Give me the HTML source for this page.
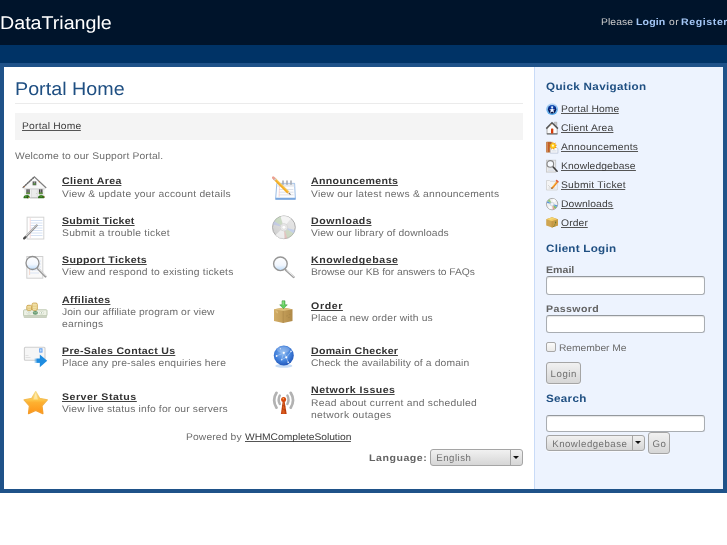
<!DOCTYPE html>
<html><head><meta charset="utf-8"><title>DataTriangle - Portal Home</title>
<style>
html,body{margin:0;padding:0;background:#fff;}
body{width:727px;height:545px;position:relative;overflow:hidden;font-family:"Liberation Sans",sans-serif;}
#w{position:absolute;left:0;top:0;width:727px;height:545px;will-change:transform;text-rendering:geometricPrecision;}
.r{position:absolute;}
.t{position:absolute;white-space:nowrap;line-height:1;transform-origin:0 0;font-family:"Liberation Sans",sans-serif;}
.inp{position:absolute;box-sizing:border-box;background:#fff;border:1px solid #a9adb2;border-top-color:#94989d;border-radius:3px;box-shadow:inset 0 1px 1px rgba(0,0,0,.10);}
.cb{position:absolute;box-sizing:border-box;width:10px;height:10px;background:linear-gradient(#fbfbfa,#ebeae8);border:1px solid #a8a8a8;border-radius:2px;}
.btn,.sel{position:absolute;box-sizing:border-box;border:1px solid #a5a5a5;border-radius:3px;background:linear-gradient(#f1f1f1,#d6d6d6);box-shadow:0 1px 0 rgba(255,255,255,.6);}
.st{position:absolute;white-space:nowrap;line-height:1;font-size:9.64px;letter-spacing:.4px;color:#707070;}
.dv{position:absolute;top:0;bottom:0;width:1px;background:#a5a5a5;}
.ar{position:absolute;width:0;height:0;border-left:3px solid transparent;border-right:3px solid transparent;border-top:3.3px solid #111;}
.ic{position:absolute;}
.si{position:absolute;}
</style></head><body>
<svg width="0" height="0" style="position:absolute"><defs>
<g id="s0"><circle cx="6.100" cy="6.100" r="5.900" fill="url(#gS0a)"/><circle cx="6.100" cy="6.250" r="4.150" fill="url(#gS0b)"/><circle cx="6.100" cy="4.200" r=".9" fill="#fff"/><path d="M6.100 5.100l1.100 1.300 1.800-.5-1.600 1.500.9 2.600-2.200-1.400-2.200 1.400.9-2.600-1.600-1.500 1.800.5z" fill="#f4f8ff"/></g>
<g id="s1"><path d="M8.300.2h2.500v4.800H8.300z" fill="#c9c9c9" stroke="#9a9a9a" stroke-width=".5"/><path d="M1 6.200L6 1.200l5.200 5v5.700H1z" fill="#fbfbfb" stroke="#9c9c9c" stroke-width=".8"/><path d="M.8 11.900h10.700" stroke="#5a5a5a" stroke-width="1"/><path d="M.3 6.600L6 .8l5.900 5.800" fill="none" stroke="#555" stroke-width="1.500" stroke-linejoin="miter"/><rect x="5" y="6.600" width="2.300" height="5" rx=".6" fill="#d63c0a"/><circle cx="4.600" cy="2.700" r=".5" fill="#d88a3a"/></g>
<g id="s2"><rect x=".2" y=".8" width="5.600" height="10.700" rx=".6" fill="#b86a2a"/><path d="M1.300 1.200v9.800" stroke="#e0a070" stroke-width=".8"/><path d="M2.600 2v9" stroke="#d8482a" stroke-width="1" stroke-dasharray="1 1.200"/><path d="M4.300 6.600h6.600l1 1.200v4.400H4.300z" fill="#f8f9fb" stroke="#b4c0d6" stroke-width=".7"/><path d="M5.500 9.500h5M5.500 10.800h5" stroke="#d5dbe6" stroke-width=".6"/><path d="M6.800.6l1 1.800 1.900-.9-.5 2 2 .6-1.700 1.200 1.100 1.800-2.100-.2-.4 2.100-1.300-1.700-1.600 1.400.1-2.100-2.100-.3 1.600-1.400-1.300-1.700 2.100.2z" fill="#f59a0a"/><circle cx="6.900" cy="4.800" r="2.500" fill="#ffc914"/><circle cx="6.900" cy="4.700" r="1.100" fill="#fff6c8"/></g>
<g id="s3"><rect x=".5" y=".2" width="9.200" height="11.900" fill="#ececec" stroke="#c4c4c4" stroke-width=".8"/><path d="M2 9h6M2 10.500h6" stroke="#d6dde8" stroke-width=".7"/><path d="M6.500 6.300l4.600 4.900" stroke="#3c3c3c" stroke-width="1.600" stroke-linecap="round"/><circle cx="4.300" cy="3.900" r="3.300" fill="#f6f9fd" stroke="#858585" stroke-width="1.100"/></g>
<g id="s4"><path d="M.5 1.500h3l.8.800h7v8.700H.5z" fill="#f4f4f4" stroke="#cfcfcf" stroke-width=".8"/><path d="M2 6l2.500 2.500M2.500 9h7" stroke="#c9c9c9" stroke-width=".7"/><path d="M5.700 8.300L10.600 2.300l1.300 1.100L7 9.400l-1.800.5z" fill="#f0861a"/><path d="M6.300 7.900L10.700 2.600" stroke="#fbd060" stroke-width=".8"/><path d="M10.600 1.600l1.400 1.200" stroke="#e0603a" stroke-width="1.600" stroke-linecap="round"/><path d="M5.200 9.900l.6-1.600 1.100 1z" fill="#6a5a40"/></g>
<g id="s5"><circle cx="6.100" cy="6.100" r="5.700" fill="#f1f1f1" stroke="#9c9c9c" stroke-width=".8"/><path d="M6.100 6.100L1.600 3.200A5.400 5.400 0 0 1 3.600 1.300z" fill="#7cc05a" opacity=".75"/><path d="M6.100 6.100L.9 5A5.400 5.400 0 0 1 1.600 3.200z" fill="#5a96dc"/><path d="M6.100 6.100l4.500 2.900A5.400 5.400 0 0 1 8.600 10.900z" fill="#62b040" opacity=".75"/><path d="M6.100 6.100L11.300 7.200A5.400 5.400 0 0 1 10.600 9z" fill="#5a96dc"/><path d="M6.100 6.100L8.600 10.900A5.400 5.400 0 0 1 6.800 11.400z" fill="#e89a8a"/><path d="M6.100 6.100L2 9.800A5.400 5.400 0 0 0 5.300 11.400z" fill="#fff" opacity=".8"/><path d="M6.100 6.100L10.200 2.400A5.400 5.400 0 0 0 6.900 .8z" fill="#fff" opacity=".8"/><circle cx="6.100" cy="6.100" r="1.900" fill="#e9edf2" stroke="#b9c2cf" stroke-width=".5"/><circle cx="6.100" cy="6.100" r=".7" fill="#fff"/></g>
<g id="s6"><path d="M.2 2.200L6 .2l5.900 2v6.200L6 10.600.2 8.400z" fill="#cfa552"/><path d="M.2 2.200L6 4.200l5.900-2L6 .2z" fill="#efc862"/><path d="M2.200 1.900l3.600-1.200 2.500.9-3.700 1.300z" fill="#f8dc78" opacity=".8"/><path d="M6 4.200v6.400l5.900-2.200V2.200z" fill="#c89c48"/><path d="M6 4.200v6.400" stroke="#b88a3a" stroke-width=".5"/><path d="M9.300 4.800l.8-.3v1.800l-.8.300zM8.300 7.700l.9-.3v.9l-.9.300zM7.300 9.400l.8-.3v.6l-.8.300z" fill="#3f6e24"/></g>

<!-- L0 house -->
<g id="L0">
<path d="M2.300 12.200h20.300v9.500H2.300z" fill="#f1f1f1"/>
<path d="M2.300 12.200h20.300v1.600H2.300z" fill="#dcdcdc"/>
<path d="M2.600 12L12.400 2.400 22.300 12z" fill="#f8f8f8"/>
<path d="M.6 12L12.400 .9 24.200 12" fill="none" stroke="#808080" stroke-width="1.300" stroke-linejoin="miter"/>
<path d="M1.500 11.100L12.400 .9" stroke="#666" stroke-width="1.200" stroke-dasharray="1.500 1"/>
<circle cx="2.200" cy="10.800" r=".55" fill="#c86a2a"/><circle cx="17.300" cy="5.800" r=".55" fill="#c86a2a"/>
<rect x="10.600" y="5.400" width="3.700" height="3.900" fill="#5d5d5d"/><rect x="11.400" y="7.300" width="2.100" height="1.500" fill="#4f9a34"/><path d="M12.450 5.400v2" stroke="#ddd" stroke-width=".5"/>
<rect x="4.400" y="13.300" width="3.300" height="4.900" fill="#3f3f3f"/><rect x="4.400" y="16.500" width="3.300" height="1.500" fill="#5f9a3a"/><path d="M6.050 13.300v3.200" stroke="#e6e6e6" stroke-width=".6"/>
<rect x="16.900" y="13.300" width="3.600" height="4.900" fill="#3f3f3f"/><rect x="16.900" y="16.500" width="3.600" height="1.500" fill="#5f9a3a"/><path d="M18.700 13.300v3.200" stroke="#e6e6e6" stroke-width=".6"/>
<rect x="9.700" y="13.200" width="5.500" height="8.500" fill="#ebebeb" stroke="#d4d4d4" stroke-width=".6"/><circle cx="14.300" cy="17.700" r=".4" fill="#aaa"/>
<path d="M8 21.900h9.200" stroke="#b4b4b4" stroke-width="1"/>
<path d="M1.500 21.400c.2-1.600 1.600-2.400 3-2.200 1.400-.4 2.800.4 3.200 1.800.2.900-.6 1.300-1.600 1.300H2.700c-.8 0-1.300-.3-1.200-.9z" fill="#2f6e1a"/>
<path d="M16 21.300c.3-1.500 1.700-2.300 3.200-2 1.500-.4 3 .4 3.400 1.800.2.900-.5 1.200-1.500 1.200h-3.900c-.8 0-1.300-.4-1.200-1z" fill="#2f6e1a"/>
<circle cx="3.600" cy="20.500" r=".9" fill="#4c9430"/><circle cx="19.200" cy="20.300" r="1" fill="#4c9430"/><circle cx="6.600" cy="21.500" r=".6" fill="#b8a420"/><circle cx="22" cy="20.800" r=".55" fill="#c8502a"/><circle cx="5.600" cy="21.700" r=".5" fill="#222"/>
</g>
<!-- L1 document + pen -->
<g id="L1">
<rect x="4.100" y="1.200" width="16.700" height="21.800" fill="#fff" stroke="#d4d4d4" stroke-width="1"/>
<path d="M7.500 4.500h12M7.500 7h12M7.500 9.500h12M7.500 12h12M7.500 14.500h12M7.500 17h12M7.500 19.500h12" stroke="#d6e2f4" stroke-width="1"/>
<path d="M7.200 2v20" stroke="#f4cccc" stroke-width=".7"/>
<path d="M1.300 22.300L13.700 9.400" stroke="#8e8e8e" stroke-width="2" stroke-linecap="round"/>
<path d="M3 20L13.500 9.200" stroke="#d9d9d9" stroke-width=".9" stroke-linecap="round"/>
<path d="M1.100 22.500l1.300-1.300" stroke="#4a4a4a" stroke-width="2" stroke-linecap="round"/>
</g>
<!-- L2 document + magnifier -->
<g id="L2">
<rect x="3.800" y="1.500" width="16" height="21.700" fill="#f9f9f9" stroke="#d0d0d0" stroke-width="1"/>
<path d="M7 6h11M7 9h11M7 12h11M7 15h11M7 18h9" stroke="#dbe5f5" stroke-width="1"/>
<path d="M6.600 14v6" stroke="#f0c8b8" stroke-width=".7"/>
<path d="M14.500 13.200l8 8.300" stroke="#9a9a9a" stroke-width="2.200" stroke-linecap="round"/>
<path d="M15.300 13.400l7.300 7.400" stroke="#ececec" stroke-width=".9" stroke-linecap="round"/>
<circle cx="9.500" cy="8" r="6.500" fill="url(#gGlass)" stroke="#909090" stroke-width="1.300"/>
</g>
<!-- L3 money -->
<g id="L3">
<rect x=".6" y="16.600" width="23.400" height="3.300" rx=".8" fill="#c9d0bf"/>
<path d="M.8 18.300h23" stroke="#e4e8dc" stroke-width=".6"/>
<rect x=".6" y="11.800" width="23.400" height="6" rx=".8" fill="#eef2e6" stroke="#b7c3aa" stroke-width=".9"/>
<ellipse cx="12.300" cy="14.800" rx="2.600" ry="1.900" fill="#5d9468"/>
<path d="M10.500 14.800h3.600" stroke="#e8f0e4" stroke-width=".5"/>
<ellipse cx="6" cy="14.800" rx="2.200" ry="1.500" fill="#fbfcf6" stroke="#bfcab2" stroke-width=".5"/>
<ellipse cx="18.600" cy="14.800" rx="2.200" ry="1.500" fill="#fbfcf6" stroke="#bfcab2" stroke-width=".5"/>
<circle cx="6" cy="14.800" r=".6" fill="#8aa88a"/><circle cx="18.600" cy="14.800" r=".6" fill="#8aa88a"/>
<rect x="3.800" y="7.300" width="4.800" height="5" rx="1.200" fill="#f6e8b4" stroke="#c9a048" stroke-width=".9"/>
<path d="M4.400 9.100h3.600M4.400 10.600h3.600" stroke="#d9b860" stroke-width=".6"/>
<rect x="9.100" y="5.100" width="5.200" height="7.200" rx="1.300" fill="#f8ecbc" stroke="#c9a048" stroke-width=".9"/>
<path d="M9.700 7.100h4M9.700 8.700h4M9.700 10.300h4" stroke="#d9b860" stroke-width=".6"/>
</g>
<!-- L4 envelope + arrow -->
<g id="L4">
<rect x="1.400" y="2.300" width="20.600" height="13" rx="1" fill="#f6f6f6" stroke="#cecece" stroke-width="1.100"/>
<path d="M2.500 12.500h5M2.500 10.500h3" stroke="#dcdcdc" stroke-width=".8"/>
<rect x="16.200" y="3.300" width="3.300" height="4.300" fill="#5a9cf0"/><rect x="17.200" y="4.300" width="1.300" height="2.300" fill="#dbe9fb"/>
<linearGradient id="gArr" x1="0" y1="0" x2="1" y2="0"><stop offset="0" stop-color="#1e8ce0" stop-opacity="0"/><stop offset=".5" stop-color="#1e8ce0"/></linearGradient>
<rect x="11" y="13.500" width="7" height="4.400" fill="url(#gArr)"/>
<path d="M16.800 9.500L24.200 15.800 16.800 22.300z" fill="#1e8ce0"/>
</g>
<!-- L5 star -->
<g id="L5">
<path d="M12.70 0.50 L16.58 7.36 L24.30 8.93 L18.98 14.74 L19.87 22.57 L12.70 19.30 L5.53 22.57 L6.42 14.74 L1.10 8.93 L8.82 7.36z" fill="url(#gStar)" stroke="url(#gStarS)" stroke-width="1.300" stroke-linejoin="round"/>
<path d="M12.700 2.200l2.300 6.400H10.400z" fill="#fff6cc" opacity=".55"/>
</g>
<!-- R0 notepad + pencil -->
<g id="R0">
<path d="M4.800 7.400h17.800l.8 16H3.600z" fill="#fdfdfd" stroke="#8fb4e2" stroke-width=".9"/>
<path d="M3.700 21.700h19.600l.1 1.800H3.600z" fill="#77a6de"/>
<path d="M5.400 7.700h16.800l.1 3H5.300z" fill="#e6e9ee"/>
<path d="M7 13.500h14.300M6.900 16.200h14.600M6.800 18.900h14.800" stroke="#dde1ea" stroke-width="1"/>
<path d="M7.600 8.500L7.100 21" stroke="#f4caca" stroke-width=".7"/>
<path d="M11 5v3.300M15 5v3.300M19 5v3.300" stroke="#a2a7b0" stroke-width="1.500" stroke-linecap="round"/>
<path d="M2 2.400L16.200 16.500" stroke="#f3ac22" stroke-width="2.700"/>
<path d="M2.600 1.900L16.700 16" stroke="#fbd873" stroke-width=".9"/>
<path d="M1.200 1.600l1.500 1.500" stroke="#eba092" stroke-width="2.700" stroke-linecap="round"/>
<path d="M2.700 3.100l.9.900" stroke="#cfcfcf" stroke-width="2.700"/>
<path d="M15.100 17.500l3 .9-.9-3z" fill="#ecd0a8"/><path d="M17.300 17.600l.9.900-.2-.9z" fill="#444" stroke="#444" stroke-width=".6"/>
</g>
<!-- R1 CD -->
<g id="R1">
<circle cx="11.900" cy="12.300" r="11.400" fill="url(#gCD)" stroke="#a6a6a6" stroke-width=".9"/>
<path d="M11.900 12.300L2.200 6.300A11.400 11.400 0 0 1 8.500 1.400z" fill="#b9d6ae" opacity=".55"/>
<path d="M11.900 12.300L1 9.500A11.400 11.400 0 0 1 2.200 6.300z" fill="#b4c0ea" opacity=".6"/>
<path d="M11.900 12.300L21.600 18.300A11.400 11.400 0 0 1 15.300 23.200z" fill="#c0d6ae" opacity=".55"/>
<path d="M11.900 12.300L22.800 15.100A11.400 11.400 0 0 1 21.600 18.300z" fill="#b0c4ee" opacity=".6"/>
<path d="M11.900 12.300L15.300 23.200A11.400 11.400 0 0 1 12.500 23.700z" fill="#e8b6ae" opacity=".6"/>
<path d="M11.900 12.300L8.500 1.400A11.400 11.400 0 0 1 19 3.400z" fill="#fafafa" opacity=".75"/>
<path d="M11.900 12.300L12.500 23.700A11.400 11.400 0 0 1 3.500 20z" fill="#f8f8f8" opacity=".7"/>
<circle cx="11.900" cy="12.300" r="3.700" fill="#ededed" stroke="#cdcdcd" stroke-width=".7"/>
<circle cx="11.900" cy="12.300" r="2.200" fill="none" stroke="#d9d9d9" stroke-width=".5"/>
<circle cx="11.900" cy="12.300" r="1.300" fill="#fff"/>
</g>
<!-- R2 magnifier -->
<g id="R2">
<path d="M13.800 15l7.800 7" stroke="#a0a0a0" stroke-width="2.300" stroke-linecap="round"/>
<path d="M14.700 15.100l7.100 6.300" stroke="#f0f0f0" stroke-width="1" stroke-linecap="round"/>
<circle cx="8.400" cy="8.800" r="6.800" fill="url(#gGlass)" stroke="#969696" stroke-width="1.400"/>
</g>
<!-- R3 box + green arrow -->
<g id="R3">
<path d="M2 9.300l9.200-1.500 9.300 1.500v11.800L11.200 23 2 21.100z" fill="url(#gBox)"/>
<path d="M2 9.300l9.200 1.600 9.300-1.600-9.300-1.500z" fill="#dcbd7a"/>
<path d="M11.200 10.900V23" stroke="#a98546" stroke-width=".6"/>
<path d="M3.500 11l2 .4M4.500 12.500l1.500.3" stroke="#ecd090" stroke-width=".7"/>
<path d="M14.500 16l1-.2M16.500 17.500l1-.2M17.500 14.500l.8-.2" stroke="#9a7a40" stroke-width=".7"/>
<path d="M10 .8h3v4h2.300l-3.800 3.900L7.700 4.800H10z" fill="#62d060" stroke="#3a8a3a" stroke-width=".5"/>
<path d="M10.600 1.300h1v3.800h-1z" fill="#a8eea0" opacity=".8"/>
</g>
<!-- R4 globe -->
<g id="R4">
<ellipse cx="11.800" cy="20.900" rx="8.500" ry="1.900" fill="#b4d0f2" opacity=".75"/>
<circle cx="11.800" cy="10.500" r="10" fill="url(#gGlobe)"/>
<ellipse cx="11.300" cy="4.600" rx="6.500" ry="3.300" fill="#fff" opacity=".22"/>
<path d="M4.400 11l7.400-3.200 2.600 4.600 4.700-6M11.800 7.800L9.600 14.600l4.800-2.200 1.800 5.200" stroke="#a9c9f3" stroke-width=".6" fill="none"/>
<circle cx="11.800" cy="7.800" r="1.100" fill="#fff"/><circle cx="14.300" cy="12.300" r="1.100" fill="#fff"/><circle cx="4.600" cy="11" r=".9" fill="#eef4ff"/><circle cx="9.700" cy="14.700" r=".8" fill="#d8ecff"/><circle cx="16.200" cy="17.300" r=".8" fill="#fff"/><circle cx="19" cy="6.400" r=".8" fill="#e0eaff"/><circle cx="8.400" cy="3.800" r=".7" fill="#cfe0fa"/>
</g>
<!-- R5 antenna -->
<g id="R5">
<path d="M4.500 1.800A14 14 0 0 0 4.500 16.700" fill="none" stroke="#b2b2b2" stroke-width="2.700" stroke-linecap="round"/>
<path d="M18.700 1.800A14 14 0 0 1 18.700 16.700" fill="none" stroke="#b2b2b2" stroke-width="2.700" stroke-linecap="round"/>
<path d="M7.800 4.500A9 9 0 0 0 7.800 13" fill="none" stroke="#b2b2b2" stroke-width="2.500" stroke-linecap="round"/>
<path d="M15.400 4.500A9 9 0 0 1 15.400 13" fill="none" stroke="#b2b2b2" stroke-width="2.500" stroke-linecap="round"/>
<path d="M10.800 9.500h1.700l2.200 13.600H8.900z" fill="#c2400c"/>
<path d="M11.300 10.500h.7l.8 12.300H10.200z" fill="#e46a28" opacity=".7"/>
<path d="M10.300 14l3 1.500M9.900 17.500l4 2" stroke="#8a2a06" stroke-width=".6" opacity=".7"/>
<circle cx="11.600" cy="8.400" r="2.500" fill="#d6480e"/><circle cx="11.300" cy="7.800" r=".7" fill="#f8c060"/>
</g>

<linearGradient id="gS0a" x1="0" y1="0" x2="0" y2="1"><stop offset="0" stop-color="#c2dcf6"/><stop offset=".5" stop-color="#7ab8ee"/><stop offset="1" stop-color="#4aa2ea"/></linearGradient>
<radialGradient id="gS0b" cx=".5" cy=".2" r=".9"><stop offset="0" stop-color="#2272dc"/><stop offset=".4" stop-color="#082a8c"/><stop offset="1" stop-color="#02061e"/></radialGradient>
<linearGradient id="gCD" x1="1" y1="0" x2="0" y2="1"><stop offset="0" stop-color="#e9e9e9"/><stop offset=".5" stop-color="#dedede"/><stop offset="1" stop-color="#c9c9c9"/></linearGradient>
<linearGradient id="gStar" x1="0" y1="0" x2="0" y2="1"><stop offset="0" stop-color="#fdf0b4"/><stop offset=".38" stop-color="#fdc648"/><stop offset=".5" stop-color="#feb030"/><stop offset="1" stop-color="#ff9416"/></linearGradient>
<linearGradient id="gStarS" x1="0" y1="0" x2="0" y2="1"><stop offset="0" stop-color="#f7df8e"/><stop offset=".4" stop-color="#f4b84a"/><stop offset="1" stop-color="#f59a26"/></linearGradient>
<radialGradient id="gGlobe" cx=".45" cy=".4" r=".6"><stop offset="0" stop-color="#86b6f0"/><stop offset=".65" stop-color="#3f7eda"/><stop offset="1" stop-color="#2358ba"/></radialGradient>
<linearGradient id="gGlass" x1="0" y1="0" x2="0" y2="1"><stop offset="0" stop-color="#ffffff"/><stop offset=".6" stop-color="#f2f7fe"/><stop offset="1" stop-color="#bddcfa"/></linearGradient>
<linearGradient id="gBox" x1="0" y1="0" x2="1" y2="0"><stop offset="0" stop-color="#d2ad66"/><stop offset="1" stop-color="#b08a48"/></linearGradient>
</defs></svg>

<div id="w">
<div class="r" style="left:0px;top:0px;width:727px;height:45px;background:#00142b;"></div>
<div class="r" style="left:0px;top:45px;width:727px;height:18px;background:#003366;"></div>
<div class="r" style="left:0px;top:63px;width:727px;height:430px;background:#1f5289;"></div>
<div class="r" style="left:4px;top:67px;width:530px;height:422px;background:#fff;"></div>
<div class="r" style="left:534px;top:67px;width:189px;height:422px;background:#edf3fe;border-left:1px solid #c9dbf7;box-sizing:border-box;"></div>
<span class="t" style="left:0.30px;top:14px;font-size:18.4px;letter-spacing:-0.013px;color:#fff;transform:scaleX(1.07);">DataTriangle</span>
<span class="t" style="left:600.90px;top:18px;font-size:9.64px;letter-spacing:0.091px;color:#ccc;transform:scaleX(1.07);">Please</span>
<span class="t" style="left:636.00px;top:18px;font-size:9.64px;letter-spacing:0.115px;color:#a3c6f5;font-weight:bold;transform:scaleX(1.1);">Login</span>
<span class="t" style="left:668.70px;top:18px;font-size:9.64px;letter-spacing:0.491px;color:#ccc;transform:scaleX(1.07);">or</span>
<span class="t" style="left:681.20px;top:18px;font-size:9.64px;letter-spacing:0.534px;color:#a3c6f5;font-weight:bold;transform:scaleX(1.1);">Register</span>
<span class="t" style="left:14.90px;top:80px;font-size:18.4px;letter-spacing:0.021px;color:#1f4f82;transform:scaleX(1.07);">Portal Home</span>
<div class="r" style="left:15px;top:103px;width:508px;height:1px;background:#ebebeb;"></div>
<div class="r" style="left:15px;top:113px;width:508px;height:27px;background:#f4f4f4;"></div>
<span class="t" style="left:22.10px;top:122px;font-size:9.64px;letter-spacing:0.190px;color:#3d3d3d;transform:scaleX(1.07);width:55.4px;height:8px;border-bottom:1px solid #555;">Portal Home</span>
<span class="t" style="left:15.00px;top:152px;font-size:9.64px;letter-spacing:0.151px;color:#6c6c6c;transform:scaleX(1.07);">Welcome to our Support Portal.</span>
<span class="t" style="left:61.80px;top:177px;font-size:9.64px;letter-spacing:0.353px;color:#333;font-weight:bold;transform:scaleX(1.1);width:54.0px;height:8px;border-bottom:1px solid #444;">Client Area</span>
<span class="t" style="left:61.80px;top:190px;font-size:9.64px;letter-spacing:0.224px;color:#6c6c6c;transform:scaleX(1.07);">View &amp; update your account details</span>
<span class="t" style="left:61.80px;top:217px;font-size:9.64px;letter-spacing:0.240px;color:#333;font-weight:bold;transform:scaleX(1.1);width:65.8px;height:8px;border-bottom:1px solid #444;">Submit Ticket</span>
<span class="t" style="left:61.80px;top:229px;font-size:9.64px;letter-spacing:0.245px;color:#6c6c6c;transform:scaleX(1.07);">Submit a trouble ticket</span>
<span class="t" style="left:61.80px;top:256px;font-size:9.64px;letter-spacing:0.317px;color:#333;font-weight:bold;transform:scaleX(1.1);width:77.0px;height:8px;border-bottom:1px solid #444;">Support Tickets</span>
<span class="t" style="left:61.80px;top:268px;font-size:9.64px;letter-spacing:0.208px;color:#6c6c6c;transform:scaleX(1.07);">View and respond to existing tickets</span>
<span class="t" style="left:61.80px;top:296px;font-size:9.64px;letter-spacing:0.351px;color:#333;font-weight:bold;transform:scaleX(1.1);width:43.8px;height:8px;border-bottom:1px solid #444;">Affiliates</span>
<span class="t" style="left:61.80px;top:308px;font-size:9.64px;letter-spacing:0.107px;color:#6c6c6c;transform:scaleX(1.07);">Join our affiliate program or view</span>
<span class="t" style="left:61.80px;top:320px;font-size:9.64px;letter-spacing:0.222px;color:#6c6c6c;transform:scaleX(1.07);">earnings</span>
<span class="t" style="left:61.80px;top:347px;font-size:9.64px;letter-spacing:0.290px;color:#333;font-weight:bold;transform:scaleX(1.1);width:102.9px;height:8px;border-bottom:1px solid #444;">Pre-Sales Contact Us</span>
<span class="t" style="left:61.80px;top:359px;font-size:9.64px;letter-spacing:0.151px;color:#6c6c6c;transform:scaleX(1.07);">Place any pre-sales enquiries here</span>
<span class="t" style="left:61.80px;top:393px;font-size:9.64px;letter-spacing:0.447px;color:#333;font-weight:bold;transform:scaleX(1.1);width:67.5px;height:8px;border-bottom:1px solid #444;">Server Status</span>
<span class="t" style="left:61.80px;top:405px;font-size:9.64px;letter-spacing:0.159px;color:#6c6c6c;transform:scaleX(1.07);">View live status info for our servers</span>
<span class="t" style="left:311.00px;top:177px;font-size:9.64px;letter-spacing:0.307px;color:#333;font-weight:bold;transform:scaleX(1.1);width:79.1px;height:8px;border-bottom:1px solid #444;">Announcements</span>
<span class="t" style="left:311.00px;top:190px;font-size:9.64px;letter-spacing:0.212px;color:#6c6c6c;transform:scaleX(1.07);">View our latest news &amp; announcements</span>
<span class="t" style="left:311.00px;top:217px;font-size:9.64px;letter-spacing:0.482px;color:#333;font-weight:bold;transform:scaleX(1.1);width:55.2px;height:8px;border-bottom:1px solid #444;">Downloads</span>
<span class="t" style="left:311.00px;top:229px;font-size:9.64px;letter-spacing:0.113px;color:#6c6c6c;transform:scaleX(1.07);">View our library of downloads</span>
<span class="t" style="left:311.00px;top:256px;font-size:9.64px;letter-spacing:0.484px;color:#333;font-weight:bold;transform:scaleX(1.1);width:79.1px;height:8px;border-bottom:1px solid #444;">Knowledgebase</span>
<span class="t" style="left:311.00px;top:268px;font-size:9.64px;letter-spacing:-0.026px;color:#6c6c6c;transform:scaleX(1.07);">Browse our KB for answers to FAQs</span>
<span class="t" style="left:311.00px;top:302px;font-size:9.64px;letter-spacing:0.604px;color:#333;font-weight:bold;transform:scaleX(1.1);width:28.6px;height:8px;border-bottom:1px solid #444;">Order</span>
<span class="t" style="left:311.00px;top:314px;font-size:9.64px;letter-spacing:0.149px;color:#6c6c6c;transform:scaleX(1.07);">Place a new order with us</span>
<span class="t" style="left:311.00px;top:347px;font-size:9.64px;letter-spacing:0.239px;color:#333;font-weight:bold;transform:scaleX(1.1);width:79.1px;height:8px;border-bottom:1px solid #444;">Domain Checker</span>
<span class="t" style="left:311.00px;top:359px;font-size:9.64px;letter-spacing:0.136px;color:#6c6c6c;transform:scaleX(1.07);">Check the availability of a domain</span>
<span class="t" style="left:311.00px;top:386px;font-size:9.64px;letter-spacing:0.440px;color:#333;font-weight:bold;transform:scaleX(1.1);width:76.4px;height:8px;border-bottom:1px solid #444;">Network Issues</span>
<span class="t" style="left:311.00px;top:399px;font-size:9.64px;letter-spacing:0.231px;color:#6c6c6c;transform:scaleX(1.07);">Read about current and scheduled</span>
<span class="t" style="left:311.00px;top:411px;font-size:9.64px;letter-spacing:0.306px;color:#6c6c6c;transform:scaleX(1.07);">network outages</span>
<svg class="ic" style="left:22.0px;top:175.5px" width="25" height="25" viewBox="0 0 25 25"><use href="#L0"/></svg>
<svg class="ic" style="left:22.5px;top:215.5px" width="25" height="25" viewBox="0 0 25 25"><use href="#L1"/></svg>
<svg class="ic" style="left:22.5px;top:255px" width="25" height="25" viewBox="0 0 25 25"><use href="#L2"/></svg>
<svg class="ic" style="left:22.5px;top:298px" width="25" height="25" viewBox="0 0 25 25"><use href="#L3"/></svg>
<svg class="ic" style="left:22.5px;top:345px" width="25" height="25" viewBox="0 0 25 25"><use href="#L4"/></svg>
<svg class="ic" style="left:22.5px;top:390.5px" width="25" height="25" viewBox="0 0 25 25"><use href="#L5"/></svg>
<svg class="ic" style="left:272px;top:175.5px" width="25" height="25" viewBox="0 0 25 25"><use href="#R0"/></svg>
<svg class="ic" style="left:272px;top:214.5px" width="25" height="25" viewBox="0 0 25 25"><use href="#R1"/></svg>
<svg class="ic" style="left:272px;top:254.5px" width="25" height="25" viewBox="0 0 25 25"><use href="#R2"/></svg>
<svg class="ic" style="left:272px;top:300px" width="25" height="25" viewBox="0 0 25 25"><use href="#R3"/></svg>
<svg class="ic" style="left:272px;top:345px" width="25" height="25" viewBox="0 0 25 25"><use href="#R4"/></svg>
<svg class="ic" style="left:272px;top:390.5px" width="25" height="25" viewBox="0 0 25 25"><use href="#R5"/></svg>
<span class="t" style="left:186.40px;top:433px;font-size:9.64px;letter-spacing:0.123px;color:#6c6c6c;transform:scaleX(1.07);">Powered by</span>
<span class="t" style="left:244.60px;top:433px;font-size:9.64px;letter-spacing:-0.035px;color:#3d3d3d;transform:scaleX(1.07);width:99.4px;height:8px;border-bottom:1px solid #555;">WHMCompleteSolution</span>
<span class="t" style="left:369.30px;top:454px;font-size:9.64px;letter-spacing:0.486px;color:#636363;font-weight:bold;transform:scaleX(1.1);">Language:</span>
<div class="sel" style="left:430px;top:449px;width:92.500px;height:16.500px"><span class="st" style="left:5.300px;top:4px;letter-spacing:.5px">English</span><i class="dv" style="left:79px"></i><i class="ar" style="left:82.400px;top:5.700px"></i></div>
<span class="t" style="left:546.00px;top:82px;font-size:10.6px;letter-spacing:0.303px;color:#1f4f82;font-weight:bold;transform:scaleX(1.1);">Quick Navigation</span>
<span class="t" style="left:560.70px;top:105px;font-size:9.64px;letter-spacing:0.085px;color:#3d3d3d;transform:scaleX(1.07);width:54.4px;height:8px;border-bottom:1px solid #555;">Portal Home</span>
<svg class="si" style="left:546px;top:103.3px;overflow:visible" width="12.5" height="12.5" viewBox="0 0 12.5 12.5"><use href="#s0"/></svg>
<span class="t" style="left:560.70px;top:124px;font-size:9.64px;letter-spacing:0.169px;color:#3d3d3d;transform:scaleX(1.07);width:48.8px;height:8px;border-bottom:1px solid #555;">Client Area</span>
<svg class="si" style="left:546px;top:122.3px;overflow:visible" width="12.5" height="12.5" viewBox="0 0 12.5 12.5"><use href="#s1"/></svg>
<span class="t" style="left:560.70px;top:143px;font-size:9.64px;letter-spacing:0.197px;color:#3d3d3d;transform:scaleX(1.07);width:72.0px;height:8px;border-bottom:1px solid #555;">Announcements</span>
<svg class="si" style="left:546px;top:141.3px;overflow:visible" width="12.5" height="12.5" viewBox="0 0 12.5 12.5"><use href="#s2"/></svg>
<span class="t" style="left:560.70px;top:162px;font-size:9.64px;letter-spacing:0.100px;color:#3d3d3d;transform:scaleX(1.07);width:69.8px;height:8px;border-bottom:1px solid #555;">Knowledgebase</span>
<svg class="si" style="left:546px;top:160.3px;overflow:visible" width="12.5" height="12.5" viewBox="0 0 12.5 12.5"><use href="#s3"/></svg>
<span class="t" style="left:560.70px;top:181px;font-size:9.64px;letter-spacing:0.217px;color:#3d3d3d;transform:scaleX(1.07);width:60.4px;height:8px;border-bottom:1px solid #555;">Submit Ticket</span>
<svg class="si" style="left:546px;top:179.3px;overflow:visible" width="12.5" height="12.5" viewBox="0 0 12.5 12.5"><use href="#s4"/></svg>
<span class="t" style="left:560.70px;top:200px;font-size:9.64px;letter-spacing:0.120px;color:#3d3d3d;transform:scaleX(1.07);width:48.6px;height:8px;border-bottom:1px solid #555;">Downloads</span>
<svg class="si" style="left:546px;top:198.3px;overflow:visible" width="12.5" height="12.5" viewBox="0 0 12.5 12.5"><use href="#s5"/></svg>
<span class="t" style="left:560.70px;top:219px;font-size:9.64px;letter-spacing:0.134px;color:#3d3d3d;transform:scaleX(1.07);width:25.1px;height:8px;border-bottom:1px solid #555;">Order</span>
<svg class="si" style="left:546px;top:217.3px;overflow:visible" width="12.5" height="12.5" viewBox="0 0 12.5 12.5"><use href="#s6"/></svg>
<span class="t" style="left:546.00px;top:244px;font-size:10.6px;letter-spacing:0.227px;color:#1f4f82;font-weight:bold;transform:scaleX(1.1);">Client Login</span>
<span class="t" style="left:546.00px;top:266px;font-size:9.64px;letter-spacing:0.010px;color:#636363;font-weight:bold;transform:scaleX(1.1);">Email</span>
<div class="inp" style="left:546px;top:276px;width:159px;height:18.5px"></div>
<span class="t" style="left:546.00px;top:305px;font-size:9.64px;letter-spacing:0.359px;color:#636363;font-weight:bold;transform:scaleX(1.1);">Password</span>
<div class="inp" style="left:546px;top:315px;width:159px;height:18px"></div>
<div class="cb" style="left:546px;top:342px"></div>
<span class="t" style="left:558.50px;top:344px;font-size:9.64px;letter-spacing:-0.059px;color:#6c6c6c;transform:scaleX(1.07);">Remember Me</span>
<div class="btn" style="left:546px;top:362px;width:35px;height:22px"><span class="st" style="left:3.600px;top:7px;letter-spacing:.55px">Login</span></div>
<span class="t" style="left:546.00px;top:394px;font-size:10.6px;letter-spacing:0.258px;color:#1f4f82;font-weight:bold;transform:scaleX(1.1);">Search</span>
<div class="inp" style="left:546px;top:415px;width:159px;height:17px"></div>
<div class="sel" style="left:546px;top:435px;width:98.500px;height:16px"><span class="st" style="left:5.200px;top:4px;letter-spacing:.52px">Knowledgebase</span><i class="dv" style="left:84.500px"></i><i class="ar" style="left:88.300px;top:5.300px"></i></div>
<div class="btn" style="left:647.500px;top:432px;width:22.500px;height:22px"><span class="st" style="left:4px;top:7px;letter-spacing:.6px">Go</span></div>
</div>
</body></html>
